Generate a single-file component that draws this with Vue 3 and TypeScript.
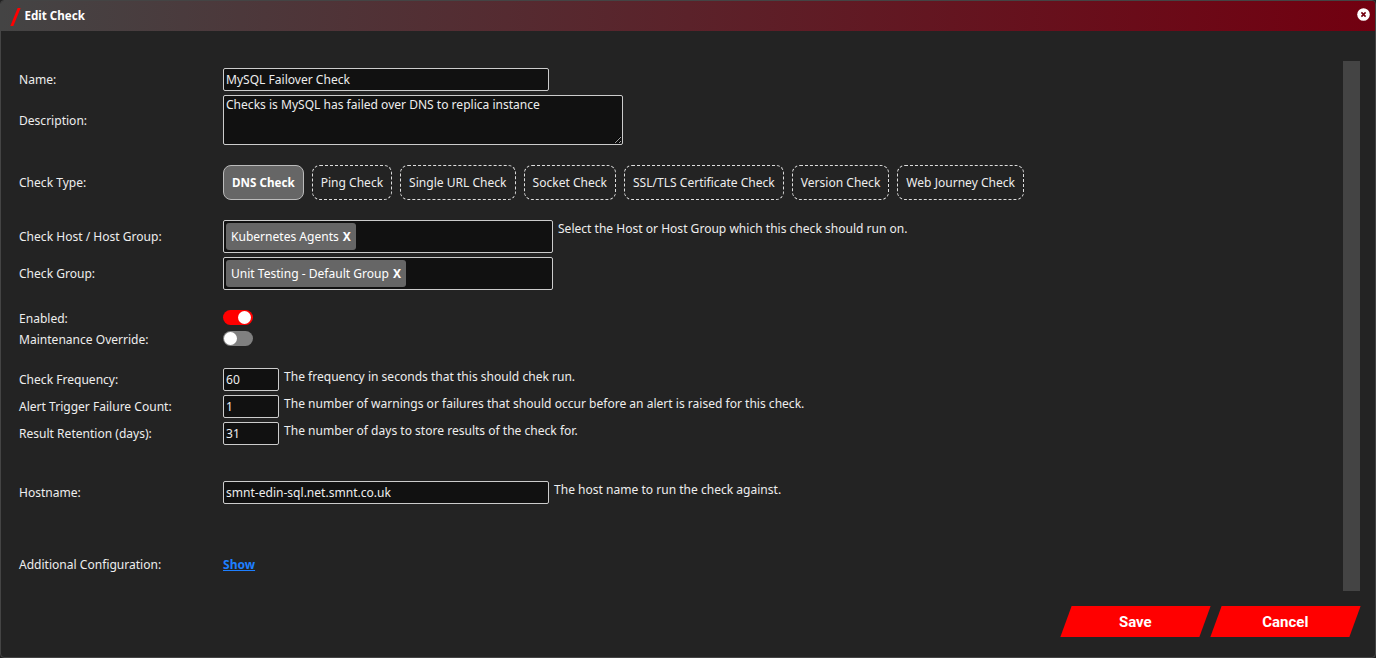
<template>
  <div class="modal">
    <header class="modal-header">
      <span class="slash"></span>
      <h1>Edit Check</h1>
      <button class="close" type="button" aria-label="Close">
        <svg viewBox="0 0 13 13" width="13" height="13">
          <circle cx="6.5" cy="6.5" r="6.3" fill="#fff" />
          <path d="M4.4 4.4l4.2 4.2M8.6 4.4l-4.2 4.2" stroke="#720010" stroke-width="1.6" fill="none" />
        </svg>
      </button>
    </header>

    <div class="modal-body">
      <form class="form" @submit.prevent>
        <div class="row row-name">
          <label>Name:</label>
          <input v-model="name" class="text wide" type="text" />
        </div>
        <div class="row row-desc">
          <label>Description:</label>
          <textarea v-model="description" class="text area"></textarea>
        </div>

        <div class="row row-type">
          <label>Check Type:</label>
          <div class="pills">
            <button
              v-for="t in checkTypes"
              :key="t"
              type="button"
              class="pill"
              :class="{ active: t === checkType }"
              @click="checkType = t"
            >{{ t }}</button>
          </div>
        </div>

        <div class="row row-host">
          <label>Check Host / Host Group:</label>
          <div class="picker"><span class="tag">Kubernetes Agents <b>X</b></span></div>
          <span class="hint hint-picker">Select the Host or Host Group which this check should run on.</span>
        </div>
        <div class="row row-group">
          <label>Check Group:</label>
          <div class="picker"><span class="tag">Unit Testing - Default Group <b>X</b></span></div>
        </div>

        <div class="row row-enabled">
          <label>Enabled:</label>
          <span class="toggle on" @click="enabled = !enabled"><i></i></span>
        </div>
        <div class="row row-override">
          <label>Maintenance Override:</label>
          <span class="toggle"><i></i></span>
        </div>

        <div v-for="(n, i) in numbers" :key="n.label" class="row" :class="i === 0 ? 'row-first-num' : 'row-num'">
          <label>{{ n.label }}</label>
          <input class="text short" type="text" :value="n.value" />
          <span class="hint">{{ n.hint }}</span>
        </div>

        <div class="row row-hostname">
          <label>Hostname:</label>
          <input class="text wide" type="text" value="smnt-edin-sql.net.smnt.co.uk" />
          <span class="hint">The host name to run the check against.</span>
        </div>

        <div class="row row-extra">
          <label>Additional Configuration:</label>
          <a href="#" class="show" @click.prevent>Show</a>
        </div>
      </form>
      <div class="scrollbar"></div>
    </div>

    <footer class="modal-footer">
      <button type="button" class="action"><span>Save</span></button>
      <button type="button" class="action"><span>Cancel</span></button>
    </footer>
  </div>
</template>

<script setup lang="ts">
import { ref } from 'vue'

const name = ref('MySQL Failover Check')
const description = ref('Checks is MySQL has failed over DNS to replica instance')
const enabled = ref(true)

const checkTypes: string[] = [
  'DNS Check',
  'Ping Check',
  'Single URL Check',
  'Socket Check',
  'SSL/TLS Certificate Check',
  'Version Check',
  'Web Journey Check',
]
const checkType = ref('DNS Check')

const numbers = [
  { label: 'Check Frequency:', value: '60', hint: 'The frequency in seconds that this should chek run.' },
  {
    label: 'Alert Trigger Failure Count:',
    value: '1',
    hint: 'The number of warnings or failures that should occur before an alert is raised for this check.',
  },
  { label: 'Result Retention (days):', value: '31', hint: 'The number of days to store results of the check for.' },
]
</script>

<style>
html,
body {
  margin: 0;
  background: #222;
}
</style>

<style scoped>
.modal {
  box-sizing: border-box;
  width: 1376px;
  height: 658px;
  display: flex;
  flex-direction: column;
  background: #232323;
  border: 1px solid #444;
  border-radius: 4px;
  overflow: hidden;
  color: #eee;
  font-family: 'Noto Sans', sans-serif;
  font-size: 12.06px;
}

.modal-header {
  height: 30px;
  flex-shrink: 0;
  display: flex;
  align-items: center;
  padding-left: 13px;
  padding-right: 5px;
  background: linear-gradient(90deg, #444 0%, #720010 100%);
}

.slash {
  width: 2.5px;
  height: 18px;
  margin-top: 1px;
  margin-right: 8px;
  background: #f00;
  transform: skewX(-22deg);
}

h1 {
  margin: 0 0 2px;
  flex: 1;
  font-size: 11.6px;
  font-weight: 700;
  color: #fff;
}

.close {
  padding: 0;
  margin-bottom: 4px;
  border: 0;
  background: none;
  display: flex;
}

.modal-body {
  flex: 1;
  min-height: 0;
  display: flex;
  padding: 30px 15px 0 18px;
}

.form {
  flex: 1;
  padding-top: 7px;
}

.scrollbar {
  width: 17px;
  height: 530px;
  background: #444;
}

.row {
  display: flex;
  align-items: center;
}

.row label {
  width: 204px;
  flex-shrink: 0;
}

.row-desc {
  margin-top: 4px;
}
.row-type {
  margin-top: 20px;
}
.row-host {
  margin-top: 20px;
  align-items: flex-start;
}
.row-host label,
.row-group label {
  line-height: 33px;
}
.row-group {
  margin-top: 4px;
}
.row-enabled {
  margin-top: 20px;
  height: 16px;
}
.row-override {
  margin-top: 5px;
  height: 16px;
}
.row-first-num {
  margin-top: 21px;
}
.row-num {
  margin-top: 4px;
}
.row-hostname {
  margin-top: 36px;
}
.row-extra {
  margin-top: 52px;
}

.text {
  box-sizing: border-box;
  height: 23px;
  padding: 1px 2px;
  background: #111;
  color: #eee;
  border: 1px solid #ccc;
  border-radius: 2px;
  font: inherit;
  outline: none;
}

.wide {
  width: 326px;
}

.short {
  width: 56px;
}

.area {
  width: 400px;
  height: 50px;
  line-height: 16px;
}

.hint {
  margin-left: 5px;
  align-self: flex-start;
  line-height: 18px;
}

.hint-picker {
  margin-left: 5px;
}

.pills {
  display: flex;
  gap: 8px;
}

.pill {
  height: 35px;
  padding: 0 8px;
  background: transparent;
  border: 1px dashed #ddd;
  border-radius: 8px;
  color: #eee;
  font: inherit;
}

.pill.active {
  background: #666;
  border: 1px solid #bbb;
  color: #fff;
  font-size: 11.65px;
  font-weight: 700;
}

.picker {
  box-sizing: border-box;
  width: 330px;
  height: 33px;
  padding: 2px;
  display: flex;
  background: #111;
  border: 1px solid #ccc;
  border-radius: 2px;
}

.tag {
  display: flex;
  align-items: center;
  gap: 4px;
  padding: 0 5px;
  background: #666;
  border-radius: 3px;
  color: #fff;
}

.toggle {
  position: relative;
  align-self: flex-start;
  width: 30px;
  height: 15px;
  border-radius: 8px;
  background: #808080;
}

.toggle i {
  position: absolute;
  top: 1px;
  left: 1px;
  width: 13px;
  height: 13px;
  border-radius: 50%;
  background: #fff;
}

.toggle.on {
  background: #f00;
}

.toggle.on i {
  left: 15px;
}

.show {
  color: #1e7fff;
  font-weight: 700;
}

.modal-footer {
  height: 65px;
  flex-shrink: 0;
  display: flex;
  justify-content: flex-end;
  padding: 14px 20px 0 0;
  box-sizing: border-box;
}

.action {
  width: 139px;
  height: 31px;
  margin-left: 11px;
  padding: 0;
  border: 0;
  background: #f00;
  color: #fff;
  font-family: Roboto, sans-serif;
  font-size: 15px;
  font-weight: 700;
  transform: skewX(-20deg);
}

.action span {
  display: block;
  transform: skewX(20deg);
}
</style>
